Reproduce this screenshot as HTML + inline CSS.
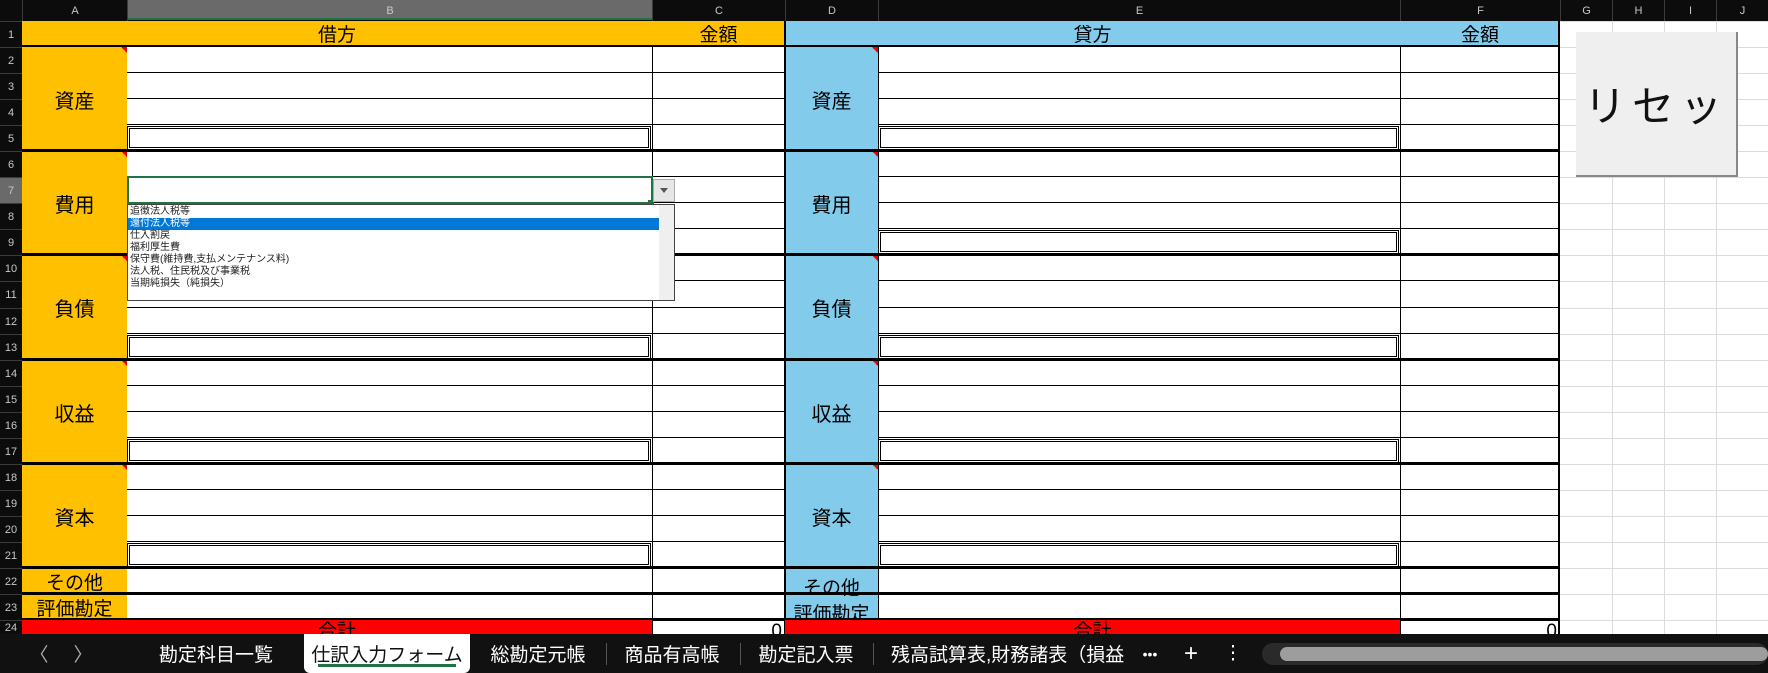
<!DOCTYPE html>
<html><head><meta charset="utf-8"><style>
*{margin:0;padding:0;box-sizing:border-box}
html,body{width:1768px;height:673px;overflow:hidden}
body{background:#fff;position:relative;font-family:"Liberation Sans","Noto Sans CJK JP",sans-serif}
.a{position:absolute}
.hd{color:#c8c8c8;font-size:11px;display:flex;align-items:center;justify-content:center}
.lb{display:flex;align-items:center;justify-content:center;font-size:20px;color:#000}
.tab{position:absolute;top:634px;height:39px;color:#fff;font-size:19px;display:flex;align-items:center;justify-content:center;white-space:nowrap;overflow:hidden}
</style></head><body>
<div id="g"></div>
<script>
var h='';function R(x,y,w,hh,st,t){h+='<div class="a" style="left:'+x+'px;top:'+y+'px;width:'+w+'px;height:'+hh+'px;'+st+'">'+(t||'')+'</div>';}
var cols=[22,127,652,785,878,1400,1560,1612,1664,1716,1768];
var names=['A','B','C','D','E','F','G','H','I','J'];
function Y(r){return r==1?21:Math.round(47+(r-2)*26.05);}
R(0,0,1768,21,'background:#0c0c0c');R(0,0,22,673,'background:#0c0c0c');
R(127,0,525,20,'background:#6a6a6a;border-bottom:2px solid #217346');
for(var i=0;i<10;i++){R(cols[i],0,cols[i+1]-cols[i],21,'border-left:1px solid #3a3a3a','<div class="hd" style="height:21px">'+names[i]+'</div>');}
for(var r=1;r<=24;r++){var y=Y(r),y2=r==24?634:Y(r+1);R(0,y,22,y2-y,(r==7?'background:#6a6a6a;':'')+'border-top:1px solid #3a3a3a','<div class="hd" style="height:100%">'+r+'</div>');}
for(var r=1;r<=24;r++){R(1560,Y(r),208,1,'background:#dcdcdc');}
for(var i=7;i<10;i++)R(cols[i],21,1,613,'background:#dcdcdc');
R(22,21,763,26,'background:#FFC000;border-bottom:2px solid #000');
R(785,21,775,26,'background:#83CBEB;border-bottom:2px solid #000');
R(22,21,630,26,'','<div class="lb" style="height:24px;font-size:19px">借方</div>');
R(652,21,133,26,'','<div class="lb" style="height:24px;font-size:19px">金額</div>');
R(785,21,615,26,'','<div class="lb" style="height:24px;font-size:19px">貸方</div>');
R(1400,21,160,26,'','<div class="lb" style="height:24px;font-size:19px">金額</div>');
var labs=['資産','費用','負債','収益','資本'];
for(var g=0;g<5;g++){var y=Y(2+g*4),y2=Y(6+g*4);
R(22,y,105,y2-y,'background:#FFC000','<div class="lb" style="height:100%">'+labs[g]+'</div>');
R(785,y,93,y2-y,'background:#83CBEB','<div class="lb" style="height:100%">'+labs[g]+'</div>');
R(121,y,6,6,'background:linear-gradient(45deg,transparent 50%,#e00 50%)');
R(872,y,6,6,'background:linear-gradient(45deg,transparent 50%,#e00 50%)');
if(g!=1){var yb=Y(5+g*4);
R(129,yb+3,520,Y(6+g*4)-yb-6,'border:1px solid #000;outline:1px solid #000;outline-offset:1px');}
var yb=Y(5+g*4);
if(g!=1||true)R(880,yb+3,517,Y(6+g*4)-yb-6,'border:1px solid #000;outline:1px solid #000;outline-offset:1px');}
R(22,Y(22),105,Y(24)-Y(22),'background:#FFC000');
R(785,Y(22),93,Y(24)-Y(22),'background:#83CBEB');
R(22,Y(22),105,26,'','<div class="lb" style="height:100%;font-size:19px">その他</div>');
R(22,Y(23),105,26,'','<div class="lb" style="height:100%;font-size:19px">評価勘定</div>');
R(785,Y(22),93,26,'','<div class="lb" style="height:100%;font-size:19px;padding-top:10px">その他</div>');
R(785,Y(23),93,26,'','<div class="lb" style="height:100%;font-size:19px;padding-top:10px">評価勘定</div>');
for(var r=2;r<=23;r++){var yb=Y(r+1)-1;var thick=[5,9,13,17,21,22,23].indexOf(r)>=0;
if(thick){R(22,yb-1,1538,3,'background:#000');}else{R(127,yb,525+133,1,'background:#000');R(878,yb,682,1,'background:#000');}}
R(652,47,1,587,'background:#000');R(784,21,2,613,'background:#000');R(878,47,1,573,'background:#000');R(1400,47,1,587,'background:#000');R(1558,21,2,613,'background:#000');
R(22,620,630,14,'background:#f00;overflow:hidden','<div style="text-align:center;font-size:19px;line-height:20px;margin-top:2px">合計</div>');
R(785,620,615,14,'background:#f00;overflow:hidden','<div style="text-align:center;font-size:19px;line-height:20px;margin-top:2px">合計</div>');
R(652,620,133,14,'overflow:hidden','<div style="text-align:right;font-size:19px;line-height:20px;margin-top:2px;padding-right:3px">0</div>');
R(1400,620,160,14,'overflow:hidden','<div style="text-align:right;font-size:19px;line-height:20px;margin-top:2px;padding-right:3px">0</div>');
R(127,176,526,28,'border:2px solid #217346');R(648,200,6,6,'background:#217346');
R(653,179,22,23,'background:#e6e6e6;border:1px solid #aaa','<div style="width:0;height:0;border-left:4px solid transparent;border-right:4px solid transparent;border-top:5px solid #555;margin:8px auto"></div>');
var it=['追徴法人税等','還付法人税等','仕入割戻','福利厚生費','保守費(維持費,支払メンテナンス料)','法人税、住民税及び事業税','当期純損失（純損失）'];
var s='';for(var i=0;i<it.length;i++){s+='<div style="height:12px;line-height:12px;font-size:10px;padding-left:2px;width:531px;white-space:nowrap;'+(i==1?'background:#0078d7;color:#fff':'color:#222')+'">'+it[i]+'</div>';}
R(127,204,548,97,'background:#fff;border:1px solid #444;padding-top:1px',s);
R(659,205,15,95,'background:#efefef');
R(1576,32,162,145,'background:#efefef;border-right:2px solid #888;border-bottom:2px solid #888;display:flex;align-items:center;justify-content:center;font-size:42px;letter-spacing:6px;color:#111','リセッ');
R(0,634,1768,39,'background:#111');
h+='<div class="tab" style="left:28px;width:22px;color:#aaa">〈</div><div class="tab" style="left:72px;width:22px;color:#aaa">〉</div>';
R(304,634,166,39,'background:#fff;border-radius:0 0 6px 6px');R(318,664,138,3,'background:#217346');
var tabs=[[148,'勘定科目一覧',136],[304,'仕訳入力フォーム',166],[470,'総勘定元帳',136],[606,'商品有高帳',132],[740,'勘定記入票',132],[873,'残高試算表,財務諸表（損益',270]];
for(var i=0;i<tabs.length;i++){h+='<div class="tab" style="left:'+tabs[i][0]+'px;width:'+tabs[i][2]+'px;'+(i==5?'justify-content:flex-start;padding-left:18px;':'')+(i==1?'color:#111':'')+'">'+tabs[i][1]+'</div>';}
[606,740,873].forEach(function(x){R(x,643,1,22,'background:#555');});
h+='<div class="tab" style="left:1135px;width:30px;font-size:14px">•••</div><div class="tab" style="left:1178px;width:26px;font-size:24px">+</div><div class="tab" style="left:1226px;width:14px">⋮</div>';
R(1262,643,506,22,'background:#2a2a2a;border-radius:11px');R(1280,647,488,14,'background:#9d9d9d;border-radius:7px');
document.getElementById('g').innerHTML=h;
</script>
</body></html>
